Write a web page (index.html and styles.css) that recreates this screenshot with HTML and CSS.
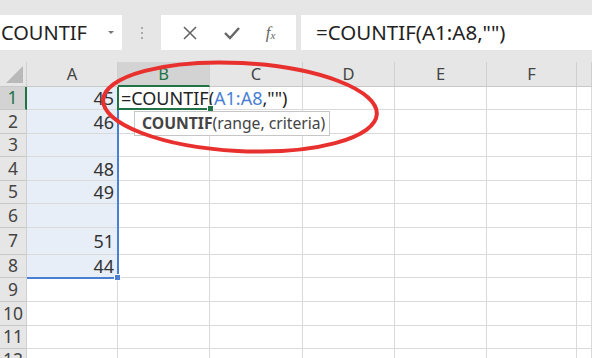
FILE: index.html
```html
<!DOCTYPE html>
<html lang="en">
<head>
  <meta charset="UTF-8" />
  <title>COUNTIF</title>
  <link rel="stylesheet" href="styles.css">
</head>
<body>

<!-- name box + formula bar -->
  <div class="toolbar">
    <div class="namebox">
      <span class="name">COUNTIF</span>
      <span class="caret"></span>
    </div>
    <div class="grip"><i></i><i></i><i></i></div>
    <div class="fxbox">
      <svg width="16" height="16" viewBox="0 0 16 16"><path d="M2 2L14 14M14 2L2 14" stroke="#666" stroke-width="1.6" fill="none"/></svg>
      <svg width="18" height="16" viewBox="0 0 18 16"><path d="M2 8L7 13L16 3" stroke="#666" stroke-width="2.4" fill="none"/></svg>
      <span class="fx">f<sub>x</sub></span>
    </div>
    <div class="formula">=COUNTIF(A1:A8,"")</div>
  </div>

  <div class="sheet">
    <div class="corner"><span class="tri"></span></div>
    <div class="colhead">A</div>
    <div class="colhead active">B</div>
    <div class="colhead">C</div>
    <div class="colhead">D</div>
    <div class="colhead">E</div>
    <div class="colhead">F</div>
    <div class="colhead"></div>

    <div class="rowhead active">1</div>
    <div class="cell sel num">45</div>
    <div class="cell cur"><span class="txt">=COUNTIF(<span class="ref">A1:A8</span>,"")</span></div>
    <div class="cell"></div><div class="cell"></div><div class="cell"></div><div class="cell"></div><div class="cell"></div>

    <div class="rowhead">2</div>
    <div class="cell sel num">46</div>
    <div class="cell"></div><div class="cell"></div><div class="cell"></div><div class="cell"></div><div class="cell"></div><div class="cell"></div>

    <div class="rowhead">3</div>
    <div class="cell sel num"></div>
    <div class="cell"></div><div class="cell"></div><div class="cell"></div><div class="cell"></div><div class="cell"></div><div class="cell"></div>

    <div class="rowhead">4</div>
    <div class="cell sel num">48</div>
    <div class="cell"></div><div class="cell"></div><div class="cell"></div><div class="cell"></div><div class="cell"></div><div class="cell"></div>

    <div class="rowhead">5</div>
    <div class="cell sel num">49</div>
    <div class="cell"></div><div class="cell"></div><div class="cell"></div><div class="cell"></div><div class="cell"></div><div class="cell"></div>

    <div class="rowhead">6</div>
    <div class="cell sel num"></div>
    <div class="cell"></div><div class="cell"></div><div class="cell"></div><div class="cell"></div><div class="cell"></div><div class="cell"></div>

    <div class="rowhead">7</div>
    <div class="cell sel num">51</div>
    <div class="cell"></div><div class="cell"></div><div class="cell"></div><div class="cell"></div><div class="cell"></div><div class="cell"></div>

    <div class="rowhead">8</div>
    <div class="cell sel num">44</div>
    <div class="cell"></div><div class="cell"></div><div class="cell"></div><div class="cell"></div><div class="cell"></div><div class="cell"></div>

    <div class="rowhead">9</div>
    <div class="cell"></div><div class="cell"></div><div class="cell"></div><div class="cell"></div><div class="cell"></div><div class="cell"></div><div class="cell"></div>

    <div class="rowhead">10</div>
    <div class="cell"></div><div class="cell"></div><div class="cell"></div><div class="cell"></div><div class="cell"></div><div class="cell"></div><div class="cell"></div>

    <div class="rowhead">11</div>
    <div class="cell"></div><div class="cell"></div><div class="cell"></div><div class="cell"></div><div class="cell"></div><div class="cell"></div><div class="cell"></div>

    <div class="rowhead">12</div>
    <div class="cell"></div><div class="cell"></div><div class="cell"></div><div class="cell"></div><div class="cell"></div><div class="cell"></div><div class="cell"></div>

    <!-- overlays: selection, active cell, tooltip, hand-drawn ring -->
    <div class="selbox"><span class="handle"></span></div>
    <div class="curbox"><span class="handle green"></span></div>
    <div class="tip"><b>COUNTIF</b>(range, criteria)</div>
    <svg class="ring" width="592" height="296" viewBox="0 0 592 296">
      <ellipse cx="240" cy="45" rx="137" ry="44" transform="rotate(3 240 45)" fill="none" stroke="#e8312e" stroke-width="4"/>
    </svg>
  </div>

</body>
</html>
```

FILE: styles.css
```css
body {
  margin: 0;
  width: 592px;
  height: 358px;
  overflow: hidden;
  background: #fff;
  font-family: "Noto Sans", "Open Sans", Arial, sans-serif;
  color: #333;
}
.toolbar {
  height: 62px;
  background: #e6e6e6;
  display: flex;
  align-items: flex-start;
  padding-top: 15px;
  box-sizing: border-box;
}
.namebox {
  width: 122px;
  height: 35px;
  background: #fff;
  display: flex;
  align-items: center;
  justify-content: space-between;
  padding: 0 8px 0 1px;
  box-sizing: border-box;
}
.name {
  font-size: 20px;
  color: #222;
}
.caret {
  width: 0;
  height: 0;
  border-left: 3px solid transparent;
  border-right: 3px solid transparent;
  border-top: 3px solid #777;
}
.grip {
  width: 39px;
  height: 35px;
  display: flex;
  flex-direction: column;
  align-items: center;
  justify-content: center;
  gap: 3px;
}
.grip i {
  width: 2px;
  height: 2px;
  background: #aaa;
}
.fxbox {
  width: 135px;
  height: 35px;
  background: #fff;
  display: flex;
  align-items: center;
  justify-content: space-around;
  padding: 0 8px;
  box-sizing: border-box;
}
.fx {
  font-family: "Liberation Serif", serif;
  font-style: italic;
  font-size: 17px;
  color: #666;
}
.fx sub {
  font-size: 11px;
  vertical-align: -1px;
}
.formula {
  margin-left: 5px;
  flex: 1;
  height: 35px;
  background: #fff;
  font-size: 20.5px;
  line-height: 35px;
  padding-left: 15px;
  color: #222;
}
.sheet {
  position: relative;
  display: grid;
  grid-template-columns: 27px 91px 92px 93px 92px 92px 90px 15px;
  grid-template-rows: 25px 23px 24px 23px 24px 23px 24px 27px 23px 24px 24px 23px 23px;
}
.corner, .colhead, .rowhead {
  background: #e6e6e6;
  border-right: 1px solid #d0d0d0;
  border-bottom: 1px solid #c8c8c8;
  box-sizing: border-box;
  color: #444;
}
.corner {
  position: relative;
}
.tri {
  position: absolute;
  right: 3px;
  bottom: 3px;
  width: 0;
  height: 0;
  border-left: 17px solid transparent;
  border-bottom: 17px solid #b9b9b9;
}
.colhead {
  font-size: 16.5px;
  text-align: center;
  line-height: 24px;
}
.colhead.active {
  background: #d3d3d3;
  color: #217346;
  border-bottom: 2px solid #217346;
}
.rowhead {
  font-size: 17.5px;
  line-height: 1;
  text-align: center;
  display: flex;
  align-items: center;
  justify-content: center;
}
.rowhead.active {
  background: #d3d3d3;
  color: #217346;
  border-right: 2px solid #217346;
}
.cell {
  border-right: 1px solid #dadada;
  border-bottom: 1px solid #dadada;
  box-sizing: border-box;
  font-size: 18px;
  display: flex;
  align-items: center;
  white-space: nowrap;
}
.cell.sel {
  background: #e8eef8;
}
.num {
  justify-content: flex-end;
  padding-right: 3px;
}
.cur {
  overflow: visible;
  position: relative;
  z-index: 1;
  padding-left: 3px;
}
.txt {
  color: #222;
}
.ref {
  color: #4a7fd4;
}
.selbox {
  position: absolute;
  left: 27px;
  top: 25px;
  width: 92px;
  height: 192px;
  border-right: 2px solid #4a7fd4;
  border-bottom: 2px solid #4a7fd4;
  box-sizing: border-box;
}
.curbox {
  position: absolute;
  left: 117px;
  top: 25px;
  width: 93px;
  height: 23px;
  border-left: 2px solid #217346;
  border-bottom: 2px solid #217346;
  box-sizing: border-box;
  z-index: 2;
}
.handle {
  position: absolute;
  right: -4px;
  bottom: -4px;
  width: 5px;
  height: 5px;
  background: #4a7fd4;
  border: 1px solid #fff;
}
.handle.green {
  background: #217346;
}
.tip {
  position: absolute;
  left: 134px;
  top: 49px;
  width: 196px;
  height: 25px;
  box-sizing: border-box;
  background: #fff;
  border: 1px solid #c6c6c6;
  font-size: 15.7px;
  line-height: 23px;
  padding-left: 7px;
  color: #444;
  z-index: 3;
  white-space: nowrap;
}
.tip b {
  font-weight: bold;
}
.ring {
  position: absolute;
  left: 0;
  top: 0;
  z-index: 4;
  overflow: visible;
}
```
